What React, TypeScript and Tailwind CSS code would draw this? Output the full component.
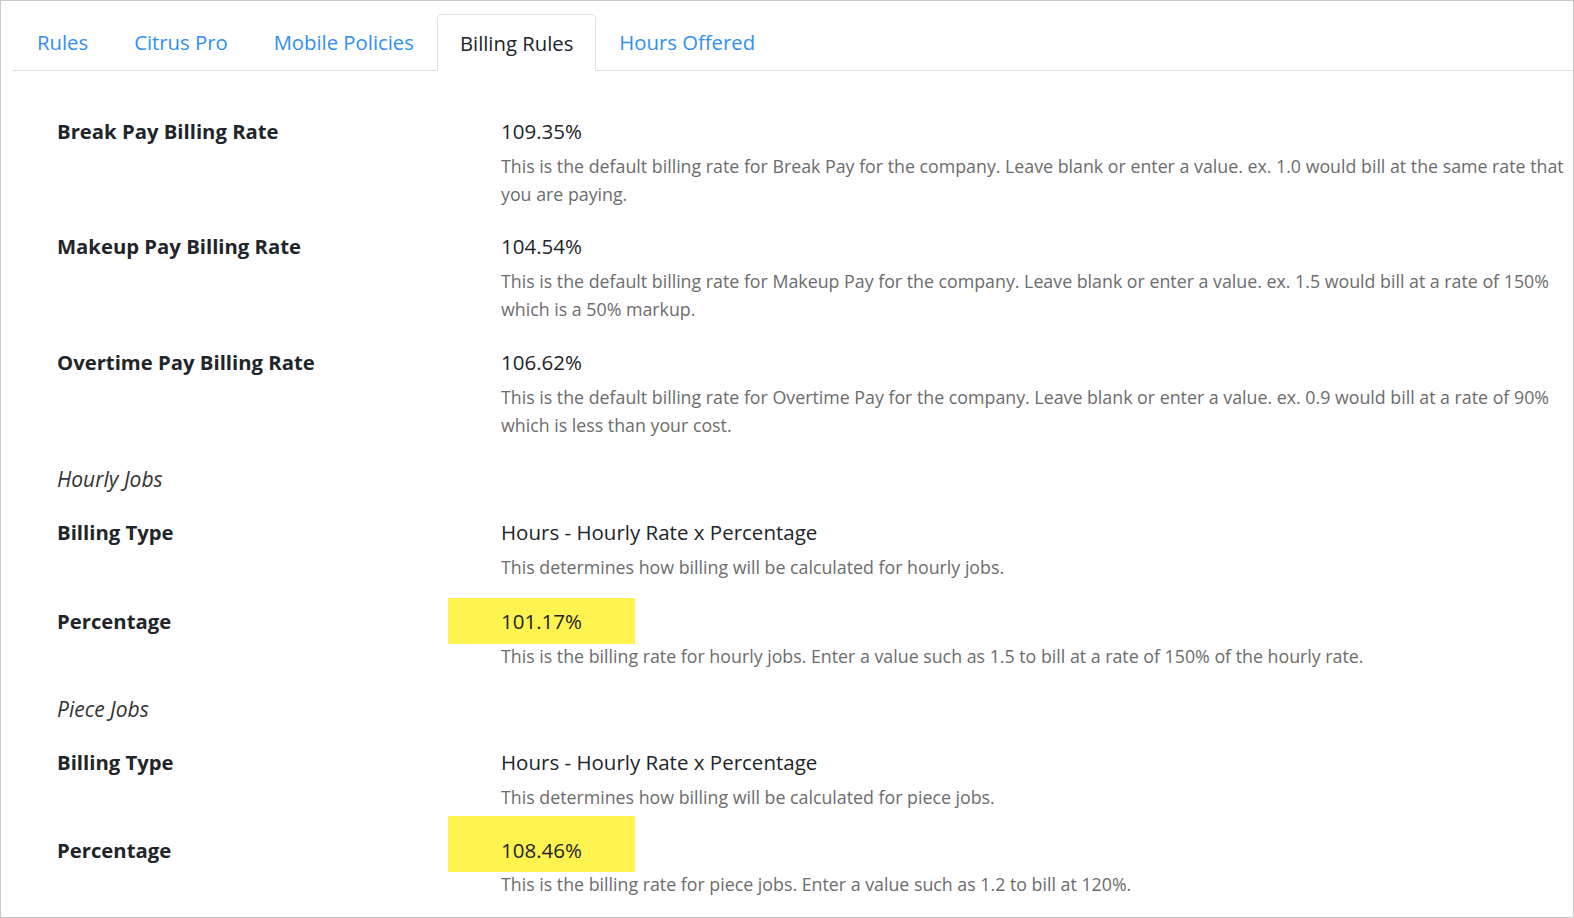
import * as React from "react";

type Row =
  | { kind: "field"; label: string; value: string; help: string; highlight?: "sm" | "lg"; gap?: string }
  | { kind: "group"; title: string; gap: string };

const tabs = ["Rules", "Citrus Pro", "Mobile Policies", "Billing Rules", "Hours Offered"];

const rows: Row[] = [
  {
    kind: "field",
    label: "Break Pay Billing Rate",
    value: "109.35%",
    help: "This is the default billing rate for Break Pay for the company. Leave blank or enter a value. ex. 1.0 would bill at the same rate that you are paying.",
  },
  {
    kind: "field",
    label: "Makeup Pay Billing Rate",
    value: "104.54%",
    help: "This is the default billing rate for Makeup Pay for the company. Leave blank or enter a value. ex. 1.5 would bill at a rate of 150% which is a 50% markup.",
  },
  {
    kind: "field",
    label: "Overtime Pay Billing Rate",
    value: "106.62%",
    help: "This is the default billing rate for Overtime Pay for the company. Leave blank or enter a value. ex. 0.9 would bill at a rate of 90% which is less than your cost.",
    gap: "mt-[24px]",
  },
  { kind: "group", title: "Hourly Jobs", gap: "mt-[25px]" },
  {
    kind: "field",
    label: "Billing Type",
    value: "Hours - Hourly Rate x Percentage",
    help: "This determines how billing will be calculated for hourly jobs.",
  },
  {
    kind: "field",
    label: "Percentage",
    value: "101.17%",
    help: "This is the billing rate for hourly jobs. Enter a value such as 1.5 to bill at a rate of 150% of the hourly rate.",
    highlight: "sm",
  },
  { kind: "group", title: "Piece Jobs", gap: "mt-[24px]" },
  {
    kind: "field",
    label: "Billing Type",
    value: "Hours - Hourly Rate x Percentage",
    help: "This determines how billing will be calculated for piece jobs.",
  },
  {
    kind: "field",
    label: "Percentage",
    value: "108.46%",
    help: "This is the billing rate for piece jobs. Enter a value such as 1.2 to bill at 120%.",
    highlight: "lg",
  },
];

function Tabs() {
  return (
    <ul className="flex h-[70px] items-end border-b border-[#dee2e6] pl-[2px]">
      {tabs.map((t) => {
        const active = t === "Billing Rules";
        return (
          <li key={t}>
            <div
              className={
                active
                  ? "flex h-[57px] items-center rounded-t-[5px] border border-b-0 border-[#dee2e6] bg-white px-[22px] pt-[1px] mb-[-1px] text-[20.3px] text-[#212529]"
                  : "flex h-[56px] items-center px-[23px] pt-[1px] text-[20.3px] text-[#2f8ff7]"
              }
            >
              {t}
            </div>
          </li>
        );
      })}
    </ul>
  );
}

function Field({ row }: { row: Extract<Row, { kind: "field" }> }) {
  if (row.highlight) {
    const lg = row.highlight === "lg";
    return (
      <div className={lg ? "mt-[5px]" : "mt-[17px]"}>
        <div className="flex">
          <div
            className={
              lg
                ? "flex h-[56px] w-[436px] items-center pt-[12px] pl-[45px] text-[20.3px] font-bold text-[#212529]"
                : "flex h-[46px] w-[436px] items-center pl-[45px] text-[20.3px] font-bold text-[#212529]"
            }
          >
            {row.label}
          </div>
          <div
            className={
              lg
                ? "flex h-[56px] w-[187px] items-center bg-[#fff350] pt-[12px] pl-[53px] text-[20.5px] text-[#212529]"
                : "flex h-[46px] w-[187px] items-center bg-[#fff350] pl-[53px] text-[20.5px] text-[#212529]"
            }
          >
            {row.value}
          </div>
        </div>
        <p
          className={
            lg
              ? "ml-[489px] mt-[-2px] text-[17.8px] leading-[28px] text-[#6c6c6c]"
              : "ml-[489px] mt-[-2px] text-[17.8px] leading-[28px] text-[#6c6c6c]"
          }
        >
          {row.help}
        </p>
      </div>
    );
  }
  return (
    <div className={`${row.gap ?? "mt-[23px]"} flex`}>
      <div className="w-[436px] shrink-0 pl-[45px] text-[20.3px] leading-[30px] font-bold text-[#212529]">
        {row.label}
      </div>
      <div className="pl-[53px] pr-[8px]">
        <div className="text-[20.5px] leading-[30px] text-[#212529]">{row.value}</div>
        <p className="mt-[6px] text-[17.8px] leading-[28px] text-[#6c6c6c]">{row.help}</p>
      </div>
    </div>
  );
}

export default function App() {
  return (
    <div
      className="h-[918px] overflow-hidden border border-[#c8c8c8] bg-white pl-[11px]"
      style={{ fontFamily: '"Open Sans", "Segoe UI", sans-serif' }}
    >
      <Tabs />
      <div className="pt-[22px]">
        {rows.map((row, i) =>
          row.kind === "group" ? (
            <div key={i} className={`${row.gap} pl-[45px] text-[21px] leading-[30px] italic text-[#333]`}>
              {row.title}
            </div>
          ) : (
            <Field key={i} row={row} />
          )
        )}
      </div>
    </div>
  );
}
